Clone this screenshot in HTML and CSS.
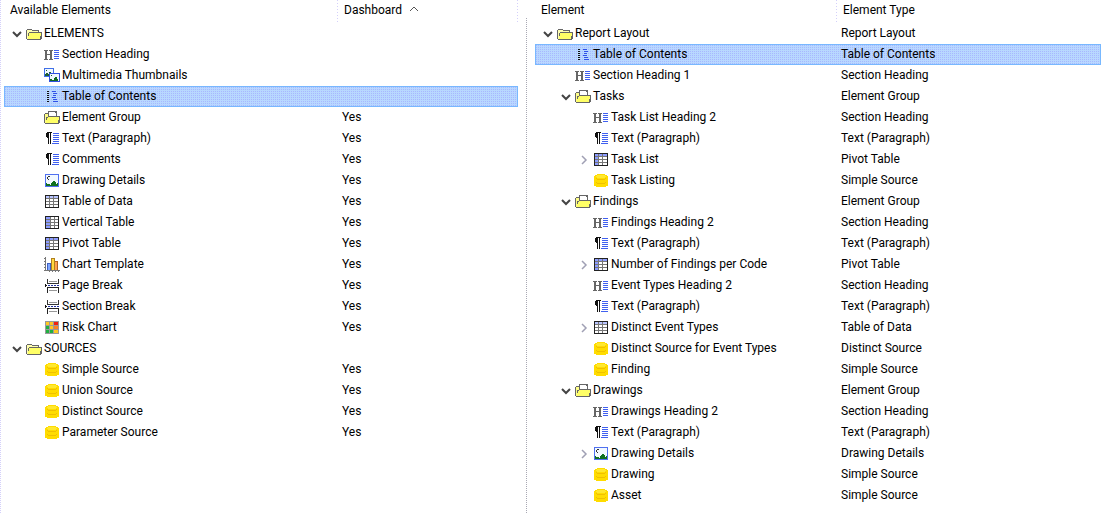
FILE: index.html
```html
<!DOCTYPE html>
<html lang="en">
<head>
    <meta charset="UTF-8">
    <meta name="viewport" content="width=device-width, initial-scale=1.0">
    <title>Report Layout</title>
    <link rel="stylesheet" href="styles.css">
</head>
<body>
    <!-- Icon set -->
    <svg class="sprite" aria-hidden="true">
        <symbol id="folder" viewBox="0 0 16 16">
            <path d="M0 14V5h1V4h5v1h7v2h3v7h-1v1H1v-1z" fill="#666"/>
            <path d="M1 14V5h5v1h6v1H3v1H2v6z" fill="#ffffb0"/>
            <path d="M3 8h12v3h-1v3H2v-3h1z" fill="#ffff66"/>
            <path d="M2 8h1v3H2zM14 12h1v2h-1z" fill="#666"/>
        </symbol>
        <symbol id="group" viewBox="0 0 16 16">
            <path d="M0 14V5h1V4h3V2h8l1 1v4h3v7h-1v1H1v-1z" fill="#666"/>
            <path d="M1 14V5h3v3H2v6z" fill="#ffff88"/>
            <path d="M5 3h6v1h1v3H5z" fill="#fff"/>
            <path d="M3 9h1V8h11v3h-1v3H2v-3h1z" fill="#ffff66"/>
            <path d="M2 9h1v2H2zM14 12h1v2h-1z" fill="#666"/>
        </symbol>
        <symbol id="heading" viewBox="0 0 16 16">
            <path d="M0 4h4v1H3v3h3V5H5V4h4v1H8v8h1v1H5v-1h1V9H3v4h1v1H0v-1h1V5H0z" fill="#666"/>
            <path d="M10 4h5v1h-5zM10 6h5v1h-5zM10 8h5v1h-5zM10 10h5v1h-5zM10 12h5v1h-5z" fill="#4060f0"/>
        </symbol>
        <symbol id="media" viewBox="0 0 16 16">
            <path d="M0 1h10v9H0z" fill="#4070e8"/>
            <path d="M1 2h8v7H1z" fill="#f0f8ff"/>
            <path d="M2 3h1v1H2zM1 9V7h1V6h2v1h1V5h2v1h1v3z" fill="#206030"/>
            <path d="M5 6h11v9H5z" fill="#3050e0"/>
            <path d="M6 7h9v7H6z" fill="#f0f8ff"/>
            <path d="M7 8h1v1H7zM6 14v-2h2v1h2v-2h1v-1h2v2h1v2z" fill="#106820"/>
        </symbol>
        <symbol id="toc" viewBox="0 0 16 16">
            <path d="M3 3h2v1H3zM3 5h2v1H3zM3 7h2v1H3zM3 9h2v1H3zM3 11h2v1H3zM3 13h2v1H3z" fill="#111"/>
            <path d="M8 3h4v1H8zM9 5h4v1H9zM9 7h3v1H9zM8 9h4v1H8zM9 11h4v1H9zM9 13h5v1H9z" fill="#3050e8"/>
        </symbol>
        <symbol id="text" viewBox="0 0 16 16">
            <path d="M3 2h5v1H7v11H6V3H5v11H4V8H3V7H2V3h1z" fill="#111"/>
            <path d="M9 3h6v1H9zM9 5h6v1H9zM9 7h6v1H9zM9 9h6v1H9zM9 11h6v1H9zM8 13h7v1H8z" fill="#4060f0"/>
        </symbol>
        <symbol id="drawing" viewBox="0 0 16 16">
            <path d="M1 2h14v13H1z" fill="#5070f0"/>
            <path d="M2 3h12v11H2z" fill="#f2f9ff"/>
            <path d="M4 4h2v1H4zM3 5h1v2H3zM4 7h1v1H4z" fill="#333"/>
            <path d="M2 14v-3h1v1h3v1h1v-2h1v-1h1V9h2v1h1v2h1v-1h1v3z" fill="#107020"/>
        </symbol>
        <symbol id="table" viewBox="0 0 16 16">
            <path d="M1 2h14v13H1z" fill="#222"/>
            <path d="M2 3h12v11H2z" fill="#fff"/>
            <path d="M2 3h12v2H2z" fill="#b8c4ff"/>
            <path d="M2 5h12v1H2zM2 8h12v1H2zM2 11h12v1H2zM5 3h1v11H5zM9 3h1v11H9z" fill="#777"/>
        </symbol>
        <symbol id="vertical" viewBox="0 0 16 16">
            <path d="M1 2h14v13H1z" fill="#222"/>
            <path d="M2 3h12v11H2z" fill="#fff"/>
            <path d="M2 3h4v11H2z" fill="#8c9cff"/>
            <path d="M2 5h12v1H2zM2 8h12v1H2zM2 11h12v1H2zM6 3h1v11H6zM10 3h1v11h-1z" fill="#777"/>
        </symbol>
        <symbol id="pivot" viewBox="0 0 16 16">
            <path d="M1 2h14v13H1z" fill="#222"/>
            <path d="M2 3h12v11H2z" fill="#fff"/>
            <path d="M2 3h12v2H2zM2 3h3v11H2z" fill="#8c9cff"/>
            <path d="M2 5h12v1H2zM2 8h12v1H2zM2 11h12v1H2zM5 3h1v11H5zM9 3h1v11H9z" fill="#777"/>
        </symbol>
        <symbol id="chart" viewBox="0 0 16 16">
            <path d="M1 1h1v13h14v1h-1v1h-1v-1h-2v1h-1v-1H9v1H8v-1H6v1H5v-1H0v-1h1v-2H0v-1h1V9H0V8h1V6H0V5h1V3H0V2h1z" fill="#777"/>
            <path d="M3 7h4v7H3z" fill="#4060c0"/><path d="M4 8h2v6H4z" fill="#80a8ff"/>
            <path d="M7 2h4v12H7z" fill="#b08020"/><path d="M8 3h2v11H8z" fill="#ffd840"/>
            <path d="M11 5h3v9h-3z" fill="#b06020"/><path d="M11 6h2v8h-2z" fill="#ffa050"/>
        </symbol>
        <symbol id="break" viewBox="0 0 16 16">
            <path d="M3 2h1v4h10V2h1v5H3z" fill="#333"/>
            <path d="M5 4h8v1H5z" fill="#999"/>
            <path d="M1 7h1v1h1v1H2v1H1z" fill="#111"/>
            <path d="M4 8h2v1H4zM7 8h2v1H7zM10 8h2v1h-2zM13 8h2v1h-2z" fill="#2030a0"/>
            <path d="M3 10h12v6h-1v-5H4v5H3z" fill="#222"/>
            <path d="M5 13h8v1H5z" fill="#999"/>
        </symbol>
        <symbol id="risk" viewBox="0 0 16 16">
            <path d="M1 2h14v13H1z" fill="#999"/>
            <path d="M2 3h3v3H2zM6 3h3v3H6zM6 7h3v3H6zM10 11h4v3h-4z" fill="#ffc820"/>
            <path d="M10 7h4v3h-4z" fill="#ff8020"/>
            <path d="M10 3h4v3h-4z" fill="#f02010"/>
            <path d="M2 7h3v3H2zM2 11h3v3H2zM6 11h3v3H6z" fill="#20b040"/>
        </symbol>
        <symbol id="source" viewBox="0 0 16 16">
            <path d="M4 2h8v1h2v1h1v10h-2v1H3v-1H1V4h1V3h2z" fill="#ffdc00"/>
            <path d="M4 3h8v1h1v1h-1v1H4V5H3V4h1z" fill="#ffe830"/>
            <path d="M3 6h1v1h8V6h1v1h-1v1H4V7H3zM3 10h1v1h8v-1h1v1h-1v1H4v-1H3z" fill="#f0c000"/>
        </symbol>
        <symbol id="down" viewBox="0 0 10 10">
            <path d="M1 3l4 4 4-4" fill="none" stroke="#444" stroke-width="2"/>
        </symbol>
        <symbol id="right" viewBox="0 0 10 10">
            <path d="M3 1l4 4-4 4" fill="none" stroke="#a0a0b4" stroke-width="1.5"/>
        </symbol>
    </svg>

    <main class="split">
        <section class="pane pane-left">
            <table class="tree">
                <thead>
                    <tr>
                        <th class="col-name">Available Elements</th>
                        <th>Dashboard <svg class="sort" viewBox="0 0 10 6"><path d="M1 5l4-4 4 4" fill="none" stroke="#555"/></svg></th>
                    </tr>
                </thead>
                <tbody>
                    <tr><td><div class="node"><button class="toggle" aria-label="Collapse"><svg><use href="#down"/></svg></button><svg class="icon"><use href="#folder"/></svg>ELEMENTS</div></td><td></td></tr>
                    <tr><td><div class="node level-1"><svg class="icon"><use href="#heading"/></svg>Section Heading</div></td><td></td></tr>
                    <tr><td><div class="node level-1"><svg class="icon"><use href="#media"/></svg>Multimedia Thumbnails</div></td><td></td></tr>
                    <tr class="selected"><td><div class="node level-1"><svg class="icon"><use href="#toc"/></svg>Table of Contents</div></td><td></td></tr>
                    <tr><td><div class="node level-1"><svg class="icon"><use href="#group"/></svg>Element Group</div></td><td>Yes</td></tr>
                    <tr><td><div class="node level-1"><svg class="icon"><use href="#text"/></svg>Text (Paragraph)</div></td><td>Yes</td></tr>
                    <tr><td><div class="node level-1"><svg class="icon"><use href="#text"/></svg>Comments</div></td><td>Yes</td></tr>
                    <tr><td><div class="node level-1"><svg class="icon"><use href="#drawing"/></svg>Drawing Details</div></td><td>Yes</td></tr>
                    <tr><td><div class="node level-1"><svg class="icon"><use href="#table"/></svg>Table of Data</div></td><td>Yes</td></tr>
                    <tr><td><div class="node level-1"><svg class="icon"><use href="#vertical"/></svg>Vertical Table</div></td><td>Yes</td></tr>
                    <tr><td><div class="node level-1"><svg class="icon"><use href="#pivot"/></svg>Pivot Table</div></td><td>Yes</td></tr>
                    <tr><td><div class="node level-1"><svg class="icon"><use href="#chart"/></svg>Chart Template</div></td><td>Yes</td></tr>
                    <tr><td><div class="node level-1"><svg class="icon"><use href="#break"/></svg>Page Break</div></td><td>Yes</td></tr>
                    <tr><td><div class="node level-1"><svg class="icon"><use href="#break"/></svg>Section Break</div></td><td>Yes</td></tr>
                    <tr><td><div class="node level-1"><svg class="icon"><use href="#risk"/></svg>Risk Chart</div></td><td>Yes</td></tr>
                    <tr><td><div class="node"><button class="toggle" aria-label="Collapse"><svg><use href="#down"/></svg></button><svg class="icon"><use href="#folder"/></svg>SOURCES</div></td><td></td></tr>
                    <tr><td><div class="node level-1"><svg class="icon"><use href="#source"/></svg>Simple Source</div></td><td>Yes</td></tr>
                    <tr><td><div class="node level-1"><svg class="icon"><use href="#source"/></svg>Union Source</div></td><td>Yes</td></tr>
                    <tr><td><div class="node level-1"><svg class="icon"><use href="#source"/></svg>Distinct Source</div></td><td>Yes</td></tr>
                    <tr><td><div class="node level-1"><svg class="icon"><use href="#source"/></svg>Parameter Source</div></td><td>Yes</td></tr>
                </tbody>
            </table>
        </section>

        <div class="divider"></div>

        <section class="pane pane-right">
            <table class="tree">
                <thead>
                    <tr>
                        <th class="col-name">Element</th>
                        <th>Element Type</th>
                    </tr>
                </thead>
                <tbody>
                    <tr><td><div class="node"><button class="toggle" aria-label="Collapse"><svg><use href="#down"/></svg></button><svg class="icon"><use href="#folder"/></svg>Report Layout</div></td><td>Report Layout</td></tr>
                    <tr class="selected"><td><div class="node level-1"><svg class="icon"><use href="#toc"/></svg>Table of Contents</div></td><td>Table of Contents</td></tr>
                    <tr><td><div class="node level-1"><svg class="icon"><use href="#heading"/></svg>Section Heading 1</div></td><td>Section Heading</td></tr>
                    <tr><td><div class="node level-1"><button class="toggle" aria-label="Collapse"><svg><use href="#down"/></svg></button><svg class="icon"><use href="#group"/></svg>Tasks</div></td><td>Element Group</td></tr>
                    <tr><td><div class="node level-2"><svg class="icon"><use href="#heading"/></svg>Task List Heading 2</div></td><td>Section Heading</td></tr>
                    <tr><td><div class="node level-2"><svg class="icon"><use href="#text"/></svg>Text (Paragraph)</div></td><td>Text (Paragraph)</td></tr>
                    <tr><td><div class="node level-2"><button class="toggle" aria-label="Expand"><svg><use href="#right"/></svg></button><svg class="icon"><use href="#pivot"/></svg>Task List</div></td><td>Pivot Table</td></tr>
                    <tr><td><div class="node level-2"><svg class="icon"><use href="#source"/></svg>Task Listing</div></td><td>Simple Source</td></tr>
                    <tr><td><div class="node level-1"><button class="toggle" aria-label="Collapse"><svg><use href="#down"/></svg></button><svg class="icon"><use href="#group"/></svg>Findings</div></td><td>Element Group</td></tr>
                    <tr><td><div class="node level-2"><svg class="icon"><use href="#heading"/></svg>Findings Heading 2</div></td><td>Section Heading</td></tr>
                    <tr><td><div class="node level-2"><svg class="icon"><use href="#text"/></svg>Text (Paragraph)</div></td><td>Text (Paragraph)</td></tr>
                    <tr><td><div class="node level-2"><button class="toggle" aria-label="Expand"><svg><use href="#right"/></svg></button><svg class="icon"><use href="#pivot"/></svg>Number of Findings per Code</div></td><td>Pivot Table</td></tr>
                    <tr><td><div class="node level-2"><svg class="icon"><use href="#heading"/></svg>Event Types Heading 2</div></td><td>Section Heading</td></tr>
                    <tr><td><div class="node level-2"><svg class="icon"><use href="#text"/></svg>Text (Paragraph)</div></td><td>Text (Paragraph)</td></tr>
                    <tr><td><div class="node level-2"><button class="toggle" aria-label="Expand"><svg><use href="#right"/></svg></button><svg class="icon"><use href="#table"/></svg>Distinct Event Types</div></td><td>Table of Data</td></tr>
                    <tr><td><div class="node level-2"><svg class="icon"><use href="#source"/></svg>Distinct Source for Event Types</div></td><td>Distinct Source</td></tr>
                    <tr><td><div class="node level-2"><svg class="icon"><use href="#source"/></svg>Finding</div></td><td>Simple Source</td></tr>
                    <tr><td><div class="node level-1"><button class="toggle" aria-label="Collapse"><svg><use href="#down"/></svg></button><svg class="icon"><use href="#group"/></svg>Drawings</div></td><td>Element Group</td></tr>
                    <tr><td><div class="node level-2"><svg class="icon"><use href="#heading"/></svg>Drawings Heading 2</div></td><td>Section Heading</td></tr>
                    <tr><td><div class="node level-2"><svg class="icon"><use href="#text"/></svg>Text (Paragraph)</div></td><td>Text (Paragraph)</td></tr>
                    <tr><td><div class="node level-2"><button class="toggle" aria-label="Expand"><svg><use href="#right"/></svg></button><svg class="icon"><use href="#drawing"/></svg>Drawing Details</div></td><td>Drawing Details</td></tr>
                    <tr><td><div class="node level-2"><svg class="icon"><use href="#source"/></svg>Drawing</div></td><td>Simple Source</td></tr>
                    <tr><td><div class="node level-2"><svg class="icon"><use href="#source"/></svg>Asset</div></td><td>Simple Source</td></tr>
                </tbody>
            </table>
        </section>
    </main>
</body>
</html>
```
FILE: styles.css
```css
body {
    margin: 0;
    background: #fff;
    color: #000;
    font-family: Roboto, "Open Sans", sans-serif;
    font-size: 12px;
}
.sprite {
    display: none;
}
.split {
    display: grid;
    grid-template-columns: 526fr 1px 574fr;
    min-height: 100vh;
}
.pane {
    min-width: 0;
}
.pane-left {
    border-left: 1px dotted #d4d0fa;
    padding: 0 8px 0 3px;
}
.pane-right {
    padding-left: 8px;
}
.divider {
    margin-top: 18px;
    border-left: 1px dotted #a8a8b4;
}
.tree {
    width: 100%;
    table-layout: fixed;
    border-collapse: separate;
    border-spacing: 0;
}
.tree th,
.tree td {
    box-sizing: border-box;
    text-align: left;
    white-space: nowrap;
}
.tree th {
    height: 23px;
    padding: 0 6px 2px;
    font-weight: normal;
    line-height: 21px;
    background: repeating-linear-gradient(#d4d0fa 0 1px, #fff 1px 3px) right top / 1px 100% no-repeat;
}
.tree td {
    height: 21px;
    padding: 0 4px;
    line-height: 21px;
}
.pane-left .col-name {
    width: 334px;
}
.pane-right .col-name {
    width: 302px;
}
.pane-right th:last-child {
    background: none;
}
.node {
    display: flex;
    height: 21px;
    padding-left: 18px;
}
.level-1 {
    padding-left: 36px;
}
.level-2 {
    padding-left: 54px;
}
.icon {
    flex: none;
    width: 16px;
    height: 16px;
    margin: 2px 2px 0 0;
    shape-rendering: crispEdges;
}
.toggle {
    display: flex;
    align-items: center;
    justify-content: center;
    width: 18px;
    height: 21px;
    margin-left: -18px;
    padding: 0;
    border: none;
    background: none;
}
.toggle svg {
    width: 10px;
    height: 10px;
}
.sort {
    width: 10px;
    height: 6px;
    margin: 0 0 2px 4px;
}
/* dotted highlight */
.selected {
    outline: 1px solid #78b8ff;
    outline-offset: -1px;
    background:
        repeating-linear-gradient(90deg, #b8d8ff 0 1px, transparent 1px 2px),
        repeating-linear-gradient(#b8d8ff 0 1px, #a8b8ff 1px 2px);
}
```
